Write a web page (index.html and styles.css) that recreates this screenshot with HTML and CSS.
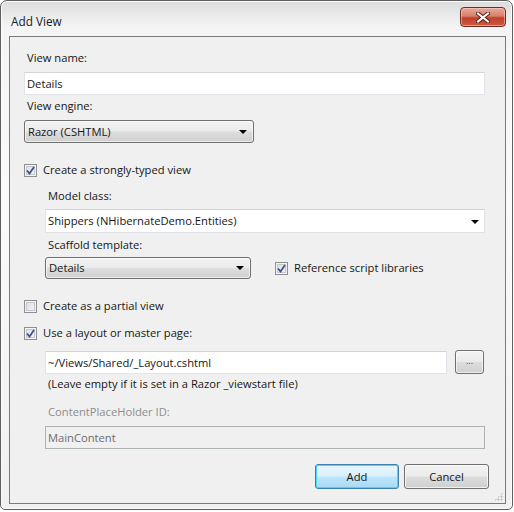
FILE: index.html
```html
<!DOCTYPE html>
<html lang="en">
<head>
    <meta charset="UTF-8">
    <title>Add View</title>
    <link rel="stylesheet" href="styles.css">
</head>
<body>
    <div class="window">
        <div class="titlebar">
            <span class="title">Add View</span>
            <span class="close">
                <svg width="14" height="11" viewBox="0 0 14 11"><path d="M2 1.5 L12 9.5 M12 1.5 L2 9.5" stroke="#5a1e14" stroke-width="4" stroke-linecap="square"/><path d="M2 1.5 L12 9.5 M12 1.5 L2 9.5" stroke="#fff" stroke-width="2" stroke-linecap="square"/></svg>
            </span>
        </div>
        <div class="client">
            <div class="label first">View name:</div>
            <div class="textbox">Details</div>

            <div class="label">View engine:</div>
            <div class="dropdown engine">Razor (CSHTML)<span class="arrow"></span></div>

            <div class="check-row strong">
                <span class="check on"><svg width="9" height="9" viewBox="0 0 9 9"><path d="M1 4.5 L3.5 7.5 L8 1" stroke="#3b4f8a" stroke-width="1.7" fill="none"/></svg></span>
                Create a strongly-typed view
            </div>

            <div class="indent">
                <div class="label model">Model class:</div>
                <div class="combo">Shippers (NHibernateDemo.Entities)<span class="arrow"></span></div>

                <div class="label scaffold">Scaffold template:</div>
                <div class="scaffold-row">
                    <div class="dropdown template">Details<span class="arrow"></span></div>
                    <div class="check-row inline">
                        <span class="check on"><svg width="9" height="9" viewBox="0 0 9 9"><path d="M1 4.5 L3.5 7.5 L8 1" stroke="#3b4f8a" stroke-width="1.7" fill="none"/></svg></span>
                        Reference script libraries
                    </div>
                </div>
            </div>

            <div class="check-row partial">
                <span class="check"></span>
                Create as a partial view
            </div>
            <div class="check-row layout">
                <span class="check on"><svg width="9" height="9" viewBox="0 0 9 9"><path d="M1 4.5 L3.5 7.5 L8 1" stroke="#3b4f8a" stroke-width="1.7" fill="none"/></svg></span>
                Use a layout or master page:
            </div>

            <div class="indent">
                <div class="path-row">
                    <div class="textbox path">~/Views/Shared/_Layout.cshtml</div>
                    <div class="browse">...</div>
                </div>
                <div class="label hint">(Leave empty if it is set in a Razor _viewstart file)</div>
                <div class="label disabled">ContentPlaceHolder ID:</div>
                <div class="textbox off">MainContent</div>
            </div>

            <div class="buttons">
                <div class="btn default">Add</div>
                <div class="btn">Cancel</div>
            </div>
            <span class="grip"></span>
        </div>
    </div>
</body>
</html>
```
FILE: styles.css
```css
* {
    margin: 0;
    padding: 0;
    box-sizing: border-box;
}
body {
    width: 514px;
    height: 512px;
    background: #ffffff;
    font-family: "Open Sans", "Noto Sans", Arial, sans-serif;
    font-size: 11.2px;
    color: #161616;
}
.window {
    width: 513px;
    height: 510px;
    border: 1px solid #5e5e5e;
    border-radius: 7px 7px 5px 5px;
    background: linear-gradient(180deg, #dcdcdc 0%, #f4f4f4 5%, #fbfbfb 40%, #f0f0f0 100%);
    display: flex;
    flex-direction: column;
    box-shadow: inset 0 0 0 1px #fdfdfd;
}
.titlebar {
    height: 35px;
    display: flex;
    align-items: flex-start;
    justify-content: space-between;
    padding-left: 10px;
}
.title {
    margin-top: 12px;
    line-height: 16px;
    font-size: 11.8px;
    color: #1a1a1a;
}
.close {
    margin-top: 6px;
    margin-right: 6px;
    width: 46px;
    height: 20px;
    border: 1px solid #6d2b21;
    border-radius: 4px;
    background: linear-gradient(180deg, #e9a899 0%, #d8806b 45%, #c1402a 55%, #cd5a3f 100%);
    box-shadow: inset 0 0 0 1px rgba(255, 220, 210, 0.5);
    display: flex;
    align-items: center;
    justify-content: center;
}
.client {
    position: relative;
    flex: 1;
    margin: 0 6px 5px 8px;
    border: 1px solid #7a7a7a;
    background: #f0f0f0;
    padding: 13px 20px 0 14px;
}
.label {
    line-height: 16px;
    padding-left: 3px;
    white-space: nowrap;
}
.textbox {
    height: 23px;
    line-height: 21px;
    border: 1px solid #e2e3ea;
    border-top-color: #d2d4da;
    background: #ffffff;
    padding-left: 2px;
    white-space: nowrap;
}
.label + .textbox {
    margin-top: 6px;
}
.textbox + .label {
    margin-top: 3px;
}
.dropdown {
    position: relative;
    height: 23px;
    line-height: 21px;
    border: 1px solid #707070;
    border-radius: 3px;
    background: linear-gradient(180deg, #f3f3f3 0%, #ebebeb 48%, #dddddd 52%, #d0d0d0 100%);
    padding-left: 3px;
    box-shadow: inset 0 0 0 1px rgba(255, 255, 255, 0.6);
}
.engine {
    margin-top: 6px;
    width: 230px;
}
.arrow {
    position: absolute;
    right: 6px;
    top: 9px;
    width: 0;
    height: 0;
    border-left: 4px solid transparent;
    border-right: 4px solid transparent;
    border-top: 4px solid #000000;
}
.check-row {
    display: flex;
    align-items: center;
    gap: 6px;
    line-height: 16px;
    white-space: nowrap;
}
.check {
    width: 13px;
    height: 13px;
    border: 1px solid #8e8f8f;
    background: linear-gradient(135deg, #d9dce0 0%, #f6f6f6 100%);
    box-shadow: inset 0 0 0 1px #f4f4f4, inset 0 0 0 2px #c4c8ce;
    display: flex;
    align-items: center;
    justify-content: center;
    flex: none;
}
.strong {
    margin-top: 19px;
}
.indent {
    padding-left: 21px;
}
.model {
    margin-top: 10px;
}
.combo {
    position: relative;
    margin-top: 5px;
    height: 24px;
    line-height: 22px;
    border: 1px solid #e0e2e8;
    border-top-color: #cfd2d8;
    background: #ffffff;
    padding-left: 2px;
}
.combo .arrow {
    top: 10px;
    right: 5px;
}
.scaffold {
    margin-top: 4px;
}
.scaffold-row {
    margin-top: 4px;
    display: flex;
    align-items: center;
    gap: 24px;
}
.template {
    width: 206px;
    height: 22px;
    line-height: 20px;
}
.template .arrow {
    top: 8px;
}
.partial {
    margin-top: 19px;
}
.layout {
    margin-top: 11px;
}
.path-row {
    margin-top: 9px;
    display: flex;
    align-items: center;
    gap: 8px;
}
.path {
    flex: 1;
}
.browse {
    width: 29px;
    height: 24px;
    border: 1px solid #707070;
    border-radius: 3px;
    background: linear-gradient(180deg, #f3f3f3 0%, #ebebeb 48%, #dddddd 52%, #d0d0d0 100%);
    box-shadow: inset 0 0 0 1px rgba(255, 255, 255, 0.6);
    text-align: center;
    line-height: 20px;
    font-size: 9px;
    color: #444444;
    margin-right: 1px;
}
.hint {
    margin-top: 2px;
}
.disabled {
    margin-top: 12px;
    color: #8d8d8d;
}
.off {
    background: #f0f0f0;
    border: 1px solid #adb2b5;
    color: #6d6d6d;
}
.buttons {
    margin-top: 15px;
    margin-right: -4px;
    display: flex;
    justify-content: flex-end;
    gap: 5px;
}
.btn {
    width: 85px;
    height: 25px;
    line-height: 23px;
    text-align: center;
    border: 1px solid #707070;
    border-radius: 3px;
    background: linear-gradient(180deg, #f3f3f3 0%, #ebebeb 48%, #dddddd 52%, #cfcfcf 100%);
    box-shadow: inset 0 0 0 1px rgba(255, 255, 255, 0.7);
}
.btn.default {
    width: 84px;
    border-color: #3c7fb1;
    background: linear-gradient(180deg, #eaf6fd 0%, #d9f0fc 48%, #bee6fd 52%, #a7d9f5 100%);
    box-shadow: inset 0 0 0 1px #48d7fb;
}
.grip {
    position: absolute;
    right: 2px;
    bottom: 2px;
    width: 9px;
    height: 9px;
    background:
        radial-gradient(circle, #b8b8b8 0.8px, transparent 1.2px) 0 0 / 3px 3px;
    clip-path: polygon(100% 0, 100% 100%, 0 100%);
}
```
